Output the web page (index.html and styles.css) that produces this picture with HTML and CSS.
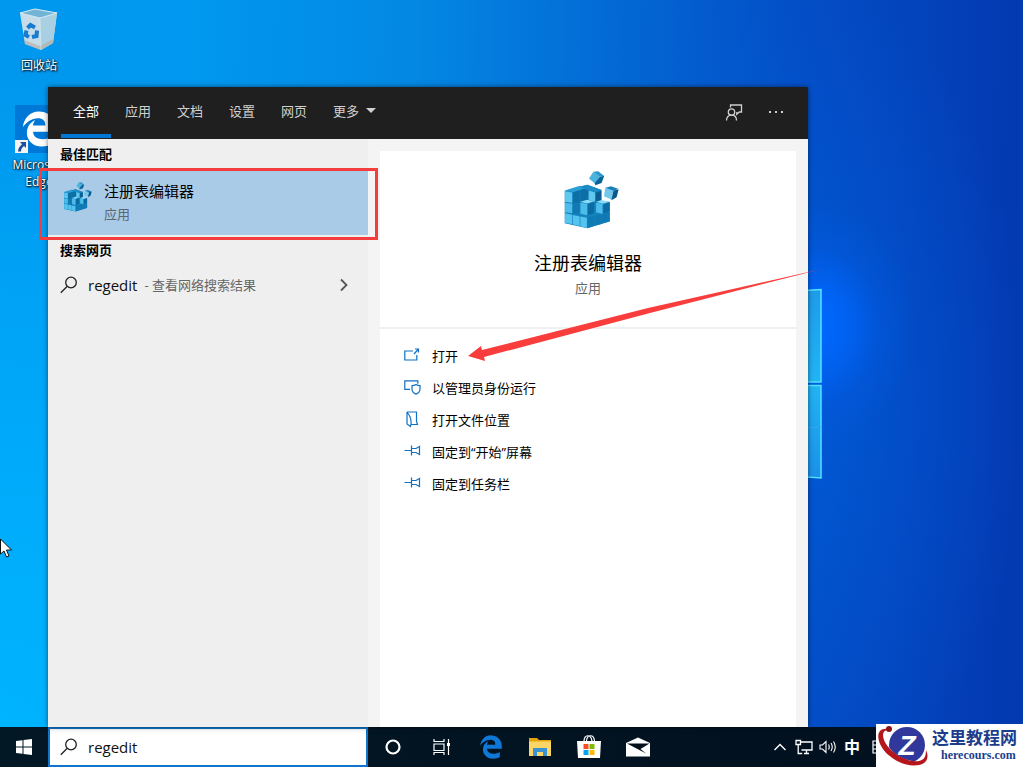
FILE: index.html
```html
<!DOCTYPE html>
<html lang="zh-CN">
<head>
<meta charset="utf-8">
<title>搜索 - regedit</title>
<link rel="stylesheet" href="styles.css">
</head>
<body>
<svg class="defs" aria-hidden="true">
  <symbol id="edge" viewBox="0 0 512 512"><path fill="currentColor" d="M25.71,228.16l.35-.48c0,.16,0,.32-.07.48Zm460.58,15.51c0-44-7.76-84.46-28.81-122.4C416.5,47.88,343.91,8,258.89,8,119,7.72,40.62,113.21,26.06,227.68c42.42-61.31,117.07-121.38,220.37-125,0,0,109.67,0,99.42,105H170c6.37-37.39,18.55-59,34.34-78.93-75.05,34.9-121.85,96.1-120.75,188.32.83,71.45,50.13,144.84,120.75,172,83.35,31.84,192.77,7.2,240.13-21.33V363.31C363.6,419.8,173.6,424.23,172.21,295.74H486.29V243.67Z"/></symbol>
  <symbol id="regedit" viewBox="0 0 160 170">
    <path fill="#1583bd" d="M0 58 66 40 108 56 108 90 132 90 132 148 66 168 0 153z"/>
    <path fill="#2a9fd6" d="M0 57 42 44 66 50 25 62z"/>
    <path fill="#0d6fa6" d="M24 63 44 56 44 92 24 96zM46 56 68 49 72 58 72 84 46 90z"/>
    <path fill="#1a8cc6" d="M44 46 66 40 108 56 90 62 66 56z"/>
    <path fill="#5fc8ee" d="M1 59 22 63 22 93 1 90zM70 57 89 63 89 90 70 84z"/>
    <path fill="#0a5f94" d="M91 64 107 58 107 86 91 92z"/>
    <path fill="#4cbdea" d="M1 93 22 96 22 124 1 121zM46 92 66 97 66 130 46 125zM92 92 111 97 111 126 92 121z"/>
    <path fill="#1478b0" d="M24 98 44 94 44 126 24 126z"/>
    <path fill="#8adaf5" d="M46 90 66 84 86 89 66 95zM92 90 108 85 131 90 112 96z"/>
    <path fill="#0b6ba3" d="M68 97 86 91 86 124 68 130zM113 98 132 92 132 118 113 125z"/>
    <path fill="#55c4ee" d="M1 124 22 128 22 156 1 152zM24 129 44 133 44 161 24 157zM46 133 65 137 65 167 46 162z"/>
    <path fill="#0f7ab4" d="M68 136 86 131 86 161 68 167zM88 131 108 125 108 155 88 160zM110 127 132 121 132 147 110 154z"/>
    <path fill="#4cb2de" d="M84 2 103 16 90 38 71 22z"/><path fill="#2b96ca" d="M84 2 98 1 115 14 103 17z"/>
    <path fill="#086398" d="M103 17 116 14 108 35 90 42 88 36z"/>
    <path fill="#72c8ea" d="M119 49 143 56 138 84 115 74z"/><path fill="#1681b8" d="M119 49 136 45 158 53 143 58z"/>
    <path fill="#07588b" d="M143 57 158 54 152 77 137 86z"/>
  </symbol>
  <symbol id="search" viewBox="0 0 18 18"><g fill="none" stroke="currentColor" stroke-width="1.3"><circle cx="11" cy="6.500" r="5.300"/><path d="M7 10.500.8 16.800"/></g></symbol>
  <symbol id="pin" viewBox="0 0 18 18"><path fill="none" stroke="currentColor" stroke-width="1.200" d="M.5 7.500H7M7.500 2.500v10M7.500 5.500h4.500l3.500-2v8l-3.500-2H7.500"/></symbol>
</svg>

<main class="desktop">
  <svg class="logo-panes" viewBox="0 0 40 192" aria-hidden="true">
    <defs><linearGradient id="pane" x1="0" y1="0" x2="0" y2="1"><stop offset="0" stop-color="#1e9bea"/><stop offset=".5" stop-color="#22b4f4"/><stop offset="1" stop-color="#1b90e8"/></linearGradient></defs>
    <path fill="url(#pane)" stroke="#4fe4ff" stroke-width="1.500" d="M-2 4 38 1.500V94H-2zM-2 97.500H38V190L-2 187z"/>
    <path stroke="#39a9ee" d="M0 142 38 139"/>
  </svg>

  <a class="shortcut recycle" href="#recycle">
    <svg class="bin" viewBox="0 0 40 44" aria-hidden="true">
      <path fill="#c6dde9" d="M1 5 21 10 38 5 34 35 22 42 6 36z"/>
      <path fill="#a9cfe2" d="M21 10 38 5 34 35 22 42z"/>
      <path fill="#b8a99c" opacity=".6" d="M5 32 21 38 34 31V35L22 42 6 36z"/>
      <path fill="#71b4d6" stroke="#dcebf2" d="M1 5 16 1 38 5 21 10z"/>
      <path fill="none" stroke="#dcebf2" opacity=".6" d="M21 10 22 42"/>
      <g fill="none" stroke="#187bd0" stroke-width="4"><path d="M8.500 20 11.500 17 16 19.500"/><path d="M18 22.500 17.500 28 13 29"/><path d="M10 29 6.500 27 7.500 22.500"/></g>
    </svg>
    <span>回收站</span>
  </a>
  <a class="shortcut edge" href="#edge-app">
    <span class="tile"><svg class="tile-e" aria-hidden="true"><use href="#edge"/></svg>
      <svg class="link-mark" viewBox="0 0 13 13" aria-hidden="true"><path fill="#f4f4f4" d="M0 0h13v13H0z"/><path fill="#1d4f9f" d="M5 2h6v6L9 6C7 7.500 6 9 6 11.500H3C3 8 5 6 7 4.200z"/></svg></span>
    <span>Microsoft<br>Edge</span>
  </a>

  <section class="flyout" aria-label="搜索">
    <header class="topbar">
      <nav class="tabs">
        <button class="tab active">全部</button>
        <button class="tab">应用</button>
        <button class="tab">文档</button>
        <button class="tab">设置</button>
        <button class="tab">网页</button>
        <button class="tab">更多<svg class="caret" viewBox="0 0 10 5" aria-hidden="true"><path fill="currentColor" d="M0 0h10L5 5z"/></svg></button>
      </nav>
      <button class="head-btn" aria-label="反馈"><svg class="i18" viewBox="0 0 18 18" aria-hidden="true"><g fill="none" stroke="currentColor" stroke-width="1.300"><circle cx="6.500" cy="8" r="3.200"/><path d="M1.500 16.500c0-3.400 2-5.300 5-5.300s5 1.900 5 5.300M5.500 3.500V1h11v7h-2.200l-2.500 2.300V8"/></g></svg></button>
      <button class="head-btn" aria-label="更多选项"><svg class="i18" viewBox="0 0 18 18" aria-hidden="true"><path fill="currentColor" d="M2 7h2v2H2zM8 7h2v2H8zM14 7h2v2h-2z"/></svg></button>
    </header>
    <div class="panes">
      <div class="results">
        <h2 class="group">最佳匹配</h2>
        <a class="best" href="#regedit-app">
          <svg class="app-small" aria-hidden="true"><use href="#regedit"/></svg>
          <span class="best-text"><span class="best-name">注册表编辑器</span><span class="kind">应用</span></span>
          <span class="mark-box"></span>
        </a>
        <h2 class="group">搜索网页</h2>
        <a class="web" href="#web">
          <svg class="i18" aria-hidden="true"><use href="#search"/></svg>
          <span class="term">regedit</span><span class="hint">- 查看网络搜索结果</span>
          <svg class="go" viewBox="0 0 8 14" aria-hidden="true"><path fill="none" stroke="currentColor" stroke-width="1.800" d="M1 1.500 6.500 7 1 12.500"/></svg>
        </a>
      </div>
      <div class="detail">
        <div class="hero">
          <svg class="app-large" aria-hidden="true"><use href="#regedit"/></svg>
          <h1 class="app-name">注册表编辑器</h1>
          <p class="kind">应用</p>
        </div>
        <div class="actions">
          <button class="action"><svg class="i18" viewBox="0 0 18 18" aria-hidden="true"><path fill="none" stroke="currentColor" stroke-width="1.200" d="M9 4H.8v9h12V8M10 7l4.500-5M11 2h3.500v3.500"/></svg>打开</button>
          <button class="action"><svg class="i18" viewBox="0 0 18 18" aria-hidden="true"><path fill="none" stroke="currentColor" stroke-width="1.200" d="M6 10.300H.8V1.800h13v3M12 5.500c1.500 1 2.500 1.200 4 1.200v3.500c0 2.500-2 4-4 5-2-1-4-2.500-4-5V6.700c1.500 0 2.500-.2 4-1.200z"/></svg>以管理员身份运行</button>
          <button class="action"><svg class="i18" viewBox="0 0 18 18" aria-hidden="true"><path fill="none" stroke="currentColor" stroke-width="1.200" d="M3 1h9.500v9.500l1 3H7.500M3 1v12l3.500 2.500C8 11 7 6 3 1"/></svg>打开文件位置</button>
          <button class="action"><svg class="i18" aria-hidden="true"><use href="#pin"/></svg>固定到“开始”屏幕</button>
          <button class="action"><svg class="i18" aria-hidden="true"><use href="#pin"/></svg>固定到任务栏</button>
          <svg class="arrow" viewBox="0 0 360 100" aria-hidden="true">
            <defs><linearGradient id="fade" gradientUnits="userSpaceOnUse" x1="335" y1="0" x2="358" y2="0"><stop offset="0" stop-color="#f93c3c"/><stop offset="1" stop-color="#f93c3c" stop-opacity=".3"/></linearGradient></defs>
            <path fill="url(#fade)" d="M0 88 13 78 14 82 180 40 358 0 182 45 16 89 17 93z"/>
          </svg>
        </div>
      </div>
    </div>
  </section>

  <svg class="pointer" viewBox="0 0 12 20" aria-hidden="true"><path fill="#fff" stroke="#111" d="M.5 1v15l3.500-3 2.500 6 2.500-1-2.500-6h5z"/></svg>
</main>

<footer class="taskbar">
  <button class="start" aria-label="开始"><svg class="i18" viewBox="0 0 18 18" aria-hidden="true"><path fill="currentColor" d="M1 3 7.500 2.200V8.500H1zM8.500 2 17 1v7.500H8.500zM1 9.500h6.500v6.300L1 15zM8.500 9.500H17V17l-8.500-1z"/></svg></button>
  <label class="searchbox"><svg class="i18" aria-hidden="true"><use href="#search"/></svg><input type="text" value="regedit" aria-label="搜索"></label>
  <nav class="apps">
    <button aria-label="Cortana"><svg class="i24" viewBox="0 0 24 24" aria-hidden="true"><circle cx="12" cy="12" r="6.500" fill="none" stroke="#fff" stroke-width="2.200"/></svg></button>
    <button aria-label="任务视图"><svg class="i24" viewBox="0 0 24 24" aria-hidden="true"><path fill="none" stroke="#fff" stroke-width="1.200" d="M4 4v2.500h10V4M4 9h10v6.500H4zM4 20v-2.500h10V20M18.500 4v16"/><path fill="#fff" d="M17 8h3v3h-3z"/></svg></button>
    <button aria-label="Edge"><svg class="i24 blue" aria-hidden="true"><use href="#edge"/></svg></button>
    <button aria-label="文件资源管理器"><svg class="i24" viewBox="0 0 24 24" aria-hidden="true"><path fill="#e5a50f" d="M1 3h8l2 2h12v5H1z"/><path fill="#fbd667" d="M1 6.500h22V21H1z"/><path fill="#3a93d0" d="M5 13h14v8h-4v-4H9v4H5z"/></svg></button>
    <button aria-label="应用商店"><svg class="i24" viewBox="0 0 24 24" aria-hidden="true"><path fill="none" stroke="#fff" stroke-width="1.200" d="M7 6C7-1 14-1 15 6M9.500 6C10-1 17-1 17.500 6"/><path fill="#fff" d="M0 6h24l-1 17H1z"/><path fill="#f25022" d="M6.500 9h5v5h-5z"/><path fill="#7fba00" d="M12.500 9h5v5h-5z"/><path fill="#00a4ef" d="M6.500 15h5v5h-5z"/><path fill="#ffb900" d="M12.500 15h5v5h-5z"/></svg></button>
    <button aria-label="邮件"><svg class="i24" viewBox="0 0 24 24" aria-hidden="true"><path fill="#fff" d="M0 8 12 2.500 24 8v13.500H0z"/><path fill="#02101e" d="M1 8.500h22.500L14.500 14l5.500 4.500L11.500 14z"/></svg></button>
  </nav>
  <div class="tray">
    <button aria-label="显示隐藏的图标"><svg class="i18" viewBox="0 0 18 18" aria-hidden="true"><path fill="none" stroke="currentColor" stroke-width="1.400" d="M3.500 12 9 6.500l5.500 5.500"/></svg></button>
    <button aria-label="网络"><svg class="i18" viewBox="0 0 18 18" aria-hidden="true"><path fill="none" stroke="currentColor" stroke-width="1.300" d="M6 4h11v8H6.500M9 15.500h5M11.500 12v3.500M1 2.500h4.500v4H1zM3.200 6.500v9h4"/></svg></button>
    <button aria-label="音量"><svg class="i18" viewBox="0 0 18 18" aria-hidden="true"><path fill="none" stroke="currentColor" stroke-width="1.100" d="M1 7h2.500L7 3.500v11L3.500 11H1zM9.500 6.500q1.500 2.500 0 5M12 5q2.500 4 0 8M14.500 3.500q3.500 5.500 0 11"/></svg></button>
    <button class="ime" aria-label="中文输入">中</button>
    <button aria-label="输入面板"><svg class="i18" viewBox="0 0 18 18" aria-hidden="true"><path fill="none" stroke="currentColor" stroke-width="1.200" d="M6 3h10v12H6zM6 7h10M6 11h10"/></svg></button>
  </div>
</footer>

<aside class="watermark">
  <svg class="mark" viewBox="0 0 56 43" aria-hidden="true">
    <circle cx="31" cy="21" r="18" fill="#30399b"/>
    <path fill="none" stroke="#fff" stroke-width="2" d="M7 14c4 14 20 26 38 24"/>
    <path fill="#b5161c" d="M13 5C3 3 0 10 4 20c6 13 24 24 39 21 9-2 10-8 7-15 0 7-2 10-7 11C30 39 12 27 8 16 6 10 7 6 13 6z"/>
    <circle cx="13" cy="5" r="3" fill="#8e1216"/>
    <text class="mark-letter" x="31" y="31" text-anchor="middle">Z</text>
  </svg>
  <div class="mark-text"><strong>这里教程网</strong><span>herecours.com</span></div>
</aside>
</body>
</html>
```
FILE: styles.css
```css
* { box-sizing: border-box; }

body {
  margin: 0;
  height: 100vh;
  display: flex;
  flex-direction: column;
  overflow: hidden;
  position: relative;
  font-family: "Open Sans", "Noto Sans CJK SC", sans-serif;
  font-size: 13px;
  line-height: 20px;
  color: #000;
}

button {
  border: 0;
  padding: 0;
  background: none;
  font: inherit;
  color: inherit;
}

a { color: inherit; text-decoration: none; }
h1, h2, p { margin: 0; font-weight: 400; }
svg { display: block; flex: none; }
.defs { position: absolute; width: 0; height: 0; }
.i18 { width: 18px; height: 18px; }
.i24 { width: 24px; height: 24px; }

.desktop {
  flex: 1;
  min-height: 0;
  display: flex;
  position: relative;
  padding: 87px 0 0 48px;
  background:
    radial-gradient(ellipse 100px 120px at 815px 325px, #0068ff 0%, #0066fccc 30%, #0060f044 65%, #0060f000 100%),
    radial-gradient(ellipse 230px 420px at 800px 400px, #0060e099 0%, #0058e000 100%),
    radial-gradient(ellipse 700px 640px at 0 100%, #00b4ff 0%, #00b0ffaa 50%, #00a8ff00 100%),
    linear-gradient(91deg, #0098ee 0%, #0098f0 18%, #0388e4 40%, #0370d8 55%, #034fc6 76%, #0340b8 92%, #0338b0 100%);
}

.logo-panes {
  position: absolute;
  left: 783px;
  top: 288px;
  width: 40px;
  height: 192px;
}

.shortcut {
  position: absolute;
  left: 2px;
  width: 74px;
  display: flex;
  flex-direction: column;
  align-items: center;
  font-size: 12px;
  line-height: 17px;
  text-align: center;
  color: #fff;
  text-shadow: 1px 1px 2px #000, 0 0 2px #000;
}

.recycle { top: 8px; gap: 5px; }
.edge { top: 105px; gap: 3px; }
.bin { width: 40px; height: 44px; }
.tile { display: flex; width: 48px; height: 48px; padding: 6px; background: #0078d7; position: relative; }
.tile-e { width: 36px; height: 36px; }
.link-mark { position: absolute; left: 0; bottom: 0; width: 13px; height: 13px; }

.flyout {
  position: relative;
  width: 760px;
  max-width: 100%;
  display: flex;
  flex-direction: column;
  box-shadow: 0 0 5px #0008;
}

.topbar {
  display: flex;
  height: 52px;
  padding: 0 11px 0 13px;
  background: #1f1f1f;
  color: #d0d0d0;
}

.tabs { display: flex; flex: 1; gap: 2px; }

.tab {
  display: flex;
  align-items: center;
  gap: 7px;
  padding: 0 12px;
  border-bottom: 4px solid transparent;
  margin-bottom: 1px;
}

.active { color: #fff; border-color: #0078d7; }
.caret { width: 10px; height: 5px; }
.head-btn { width: 42px; display: grid; place-items: center; }

.panes { flex: 1; min-height: 0; display: flex; background: #f4f4f4; }
.results { width: 320px; background: #efefef; }

.group {
  padding: 5px 12px 6px;
  font-size: 13px;
  font-weight: 700;
}

.best {
  position: relative;
  display: flex;
  gap: 12px;
  height: 65px;
  padding: 11px 16px;
  background: #a9cbe8;
}

.best-text { display: flex; flex-direction: column; gap: 3px; }
.best-name { font-size: 15px; }
.kind { color: #5c6670; }
.app-small { width: 28px; height: 32px; }
.mark-box { position: absolute; inset: -2px -10px -5px -9px; border: 3px solid #f53d3d; }

.web {
  display: flex;
  align-items: center;
  height: 38px;
  padding: 0 20px 0 12px;
  color: #222;
}

.term { margin-left: 10px; font-size: 15px; color: #111; }
.hint { flex: 1; margin-left: 7px; color: #666; }
.go { width: 8px; height: 14px; color: #555; }

.detail {
  flex: 1;
  display: flex;
  flex-direction: column;
  margin: 12px 12px 0;
  background: #fff;
}

.hero {
  display: flex;
  flex-direction: column;
  align-items: center;
  height: 178px;
  padding-top: 20px;
  border-bottom: 2px solid #efefef;
}

.hero .kind { color: #666; margin-top: 1px; }
.app-large { width: 56px; height: 58px; margin-left: 8px; }
.app-name { margin-top: 20px; font-size: 18px; line-height: 28px; }

.actions { position: relative; padding: 11px 24px; display: flex; flex-direction: column; }
.action { display: flex; align-items: center; gap: 10px; height: 32px; }
.action .i18 { color: #0f70c4; }
.arrow { position: absolute; left: 88px; top: -61px; width: 360px; height: 100px; }

.pointer { position: absolute; left: 0; top: 538px; width: 12px; height: 20px; }

.taskbar { display: flex; height: 40px; background: linear-gradient(90deg, #021824, #020f1f); color: #fff; }
.start { width: 48px; display: grid; place-items: center; }

.searchbox {
  width: 320px;
  display: flex;
  align-items: center;
  padding: 0 10px;
  border: 2px solid #0f76cc;
  background: #fff;
  color: #222;
}

.searchbox input {
  flex: 1;
  min-width: 0;
  margin-left: 10px;
  padding: 0;
  border: 0;
  outline: 0;
  font: inherit;
  font-size: 15px;
  color: #111;
}

.apps { display: flex; flex: 1; }
.apps button { width: 49px; display: grid; place-items: center; }
.blue { color: #0f78d7; }
.tray { display: flex; padding-right: 135px; }
.tray button { width: 24px; display: grid; place-items: center; }
.tray .ime { font-size: 16px; font-weight: 700; }

.watermark {
  position: absolute;
  right: 0;
  bottom: 0;
  display: flex;
  width: 147px;
  height: 43px;
  background: #fff;
  color: #1b3d8c;
}

.mark { width: 56px; height: 43px; }
.mark-letter { font: italic 700 28px "Liberation Sans", sans-serif; fill: #fff; }
.mark-text { display: flex; flex-direction: column; white-space: nowrap; }
.mark-text strong { font: 700 17px/25px "Noto Sans CJK SC", sans-serif; }
.mark-text span { padding-left: 9px; font: 700 12px/12px "Liberation Serif", serif; }
```
